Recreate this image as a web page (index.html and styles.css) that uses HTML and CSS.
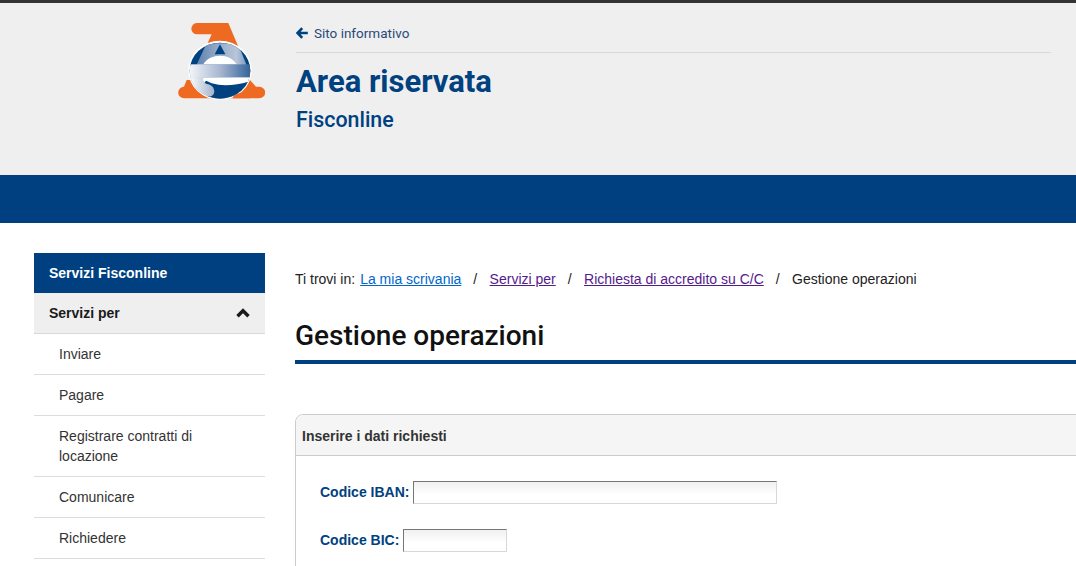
FILE: index.html
```html
<!DOCTYPE html>
<html lang="it">
<head>
<meta charset="utf-8">
<title>Gestione operazioni</title>
<link rel="stylesheet" href="styles.css">
</head>
<body>
<header class="site-header">
  <div class="logo-col">
    <svg class="logo" width="87" height="77" viewBox="24 24 261 231" aria-label="Agenzia delle Entrate">
      <defs>
        <linearGradient id="band" x1="0" x2="1" y1="0" y2="0">
          <stop offset="0" stop-color="#f6f8fb"/>
          <stop offset="0.5" stop-color="#a8b7d0"/>
          <stop offset="1" stop-color="#2f6098"/>
        </linearGradient>
        <linearGradient id="arc" x1="0" x2="1" y1="0" y2="0">
          <stop offset="0" stop-color="#4f78a8"/>
          <stop offset="0.4" stop-color="#8ea5c5"/>
          <stop offset="0.75" stop-color="#b9c6da"/>
          <stop offset="1" stop-color="#5f84b0"/>
        </linearGradient>
        <linearGradient id="low" x1="0" x2="1" y1="0" y2="0">
          <stop offset="0" stop-color="#ffffff"/>
          <stop offset="1" stop-color="#a3b3cc"/>
        </linearGradient>
        <clipPath id="disc"><ellipse cx="150" cy="167" rx="91" ry="84"/></clipPath>
      </defs>
      <path d="M80 24H175L205 95H108L125 58H82A17 17 0 0 1 80 24Z" fill="#ee6a22"/>
      <path d="M50 195H240L258 215H268A17.500 17.500 0 0 1 268 250H42A17.500 17.500 0 0 1 42 215Z" fill="#ee6a22"/>
      <ellipse cx="150" cy="166" rx="95" ry="89" fill="#fff"/>
      <path d="M190 250H240V225L190 240Z" fill="#ee6a22"/>
      <g clip-path="url(#disc)">
        <rect x="55" y="80" width="190" height="175" fill="#00417f"/>
        <path d="M110 85H203L245 187H62Z" fill="url(#arc)"/>
        <path d="M150 88L166 118H134Z" fill="#00417f"/>
        <path d="M100 148C110 130 130 122 150 122C172 122 190 132 200 148Z" fill="#fff"/>
        <rect x="55" y="148" width="190" height="39" fill="url(#band)"/>
        <rect x="55" y="187" width="190" height="70" fill="#fff"/>
        <path d="M100 208L108 197L125 205C160 215 200 210 235 200L250 225V260H120Z" fill="#00417f"/>
        <path d="M55 170L64 187H100C98 195 100 205 115 208C130 212 135 225 132 235C128 245 118 248 100 245C80 235 65 215 55 187Z" fill="url(#low)"/>
      </g>
    </svg>
  </div>
  <div class="header-main">
    <a class="back-link" href="#">
      <svg class="back-arrow" width="12" height="12" viewBox="0 0 12 12"><path d="M6.200 1.200L1.600 6L6.200 10.800M2.500 6H11.800" fill="none" stroke="#00417f" stroke-width="2.600"/></svg>
      <span>Sito informativo</span>
    </a>
    <h1 class="area-title">Area riservata</h1>
    <p class="area-sub">Fisconline</p>
  </div>
</header>
<div class="blue-band"></div>
<div class="content">
  <nav class="sidebar">
    <div class="side-title">Servizi Fisconline</div>
    <div class="side-group">
      <span>Servizi per</span>
      <svg width="14" height="10" viewBox="0 0 14 10"><path d="M1.500 8.200L7 2.700L12.500 8.200" fill="none" stroke="#1a1a1a" stroke-width="3.400"/></svg>
    </div>
    <ul class="side-list">
      <li>Inviare</li>
      <li>Pagare</li>
      <li>Registrare contratti di locazione</li>
      <li>Comunicare</li>
      <li>Richiedere</li>
    </ul>
  </nav>
  <main class="main">
    <p class="crumbs">
      <span>Ti trovi in:</span>
      <a href="#" class="link-new">La mia scrivania</a>
      <span class="sep">/</span>
      <a href="#">Servizi per</a>
      <span class="sep">/</span>
      <a href="#">Richiesta di accredito su C/C</a>
      <span class="sep">/</span>
      <span>Gestione operazioni</span>
    </p>
    <h2 class="page-title">Gestione operazioni</h2>
    <section class="panel">
      <div class="panel-head">Inserire i dati richiesti</div>
      <div class="panel-body">
        <div class="field"><label for="iban">Codice IBAN:</label><input id="iban" class="input-iban" type="text"></div>
        <div class="field"><label for="bic">Codice BIC:</label><input id="bic" class="input-bic" type="text"></div>
      </div>
    </section>
  </main>
</div>
</body>
</html>
```
FILE: styles.css
```css
html, body { margin: 0; padding: 0; }
html { height: 566px; overflow: hidden; }
body { background: #fff; font-family: "Liberation Sans", Arial, sans-serif; color: #1a1a1a; font-size: 14px; overflow: hidden; height: 566px; }

.site-header { display: flex; height: 172px; background: #efefef; border-top: 3px solid #333333; }
.logo-col { width: 296px; flex: none; display: flex; justify-content: flex-end; box-sizing: border-box; padding: 20px 31px 0 0; }
.logo { display: block; }
.header-main { width: 755px; padding-top: 14px; }
.back-link { display: flex; align-items: center; gap: 6px; height: 32px; padding-bottom: 3px; border-bottom: 1px solid #d8d8d8; color: #2a4a78; text-decoration: none; font-family: Roboto, sans-serif; font-size: 13.500px; }
.area-title { margin: 9px 0 0; font-family: Roboto, sans-serif; font-weight: 700; font-size: 31px; line-height: 40px; color: #00417f; }
.area-sub { margin: 4px 0 0; font-family: Roboto, sans-serif; font-weight: 500; font-size: 21.400px; line-height: 28px; color: #00417f; }

.blue-band { height: 48px; background: #004080; }

.content { display: flex; padding: 30px 0 0 34px; }
.sidebar { width: 231px; flex: none; }
.side-title { height: 40px; line-height: 40px; background: #004080; color: #fff; font-weight: 700; font-size: 14px; padding-left: 15px; }
.side-group { display: flex; justify-content: space-between; align-items: center; height: 40px; background: #efefef; border-bottom: 1px solid #d8d8d8; font-weight: 700; font-size: 14px; padding: 0 15px; }
.side-list { list-style: none; margin: 0; padding: 0; }
.side-list li { padding: 10px 25px; line-height: 20px; border-bottom: 1px solid #dddddd; color: #333; font-size: 14px; }

.main { width: 1000px; flex: none; margin-left: 30px; }
.crumbs { margin: 17px 0 0; display: flex; font-size: 14px; line-height: 18px; color: #222; white-space: nowrap; }
.crumbs a { color: #551a8b; text-decoration: underline; }
.crumbs a.link-new { color: #0066cc; margin-left: 5px; }
.crumbs .sep { margin: 0 12.400px 0 12px; }
.page-title { margin: 29px 0 0; padding-bottom: 5px; border-bottom: 4px solid #004080; font-family: Roboto, sans-serif; font-weight: 500; font-size: 28px; line-height: 38px; color: #111; }
.panel { margin-top: 50px; border: 1px solid #cccccc; border-radius: 8px 0 0 0; }
.panel-head { height: 40px; line-height: 42px; background: #f5f5f5; border-bottom: 1px solid #cccccc; border-radius: 8px 0 0 0; font-weight: 700; font-size: 14px; color: #333; padding-left: 6px; }
.panel-body { padding: 24px 24px; }
.field { display: flex; align-items: center; gap: 4px; height: 24px; margin-bottom: 24px; }
.field label { font-weight: 700; font-size: 14px; color: #00417f; }
.field input { box-sizing: border-box; height: 23px; margin: 0; border: 1px solid #d8d8d8; border-top-color: #767676; border-left-color: #767676; background: linear-gradient(#f0f0f0, #fff 60%); padding: 0; }
.input-iban { width: 364px; }
.input-bic { width: 104px; }
```
